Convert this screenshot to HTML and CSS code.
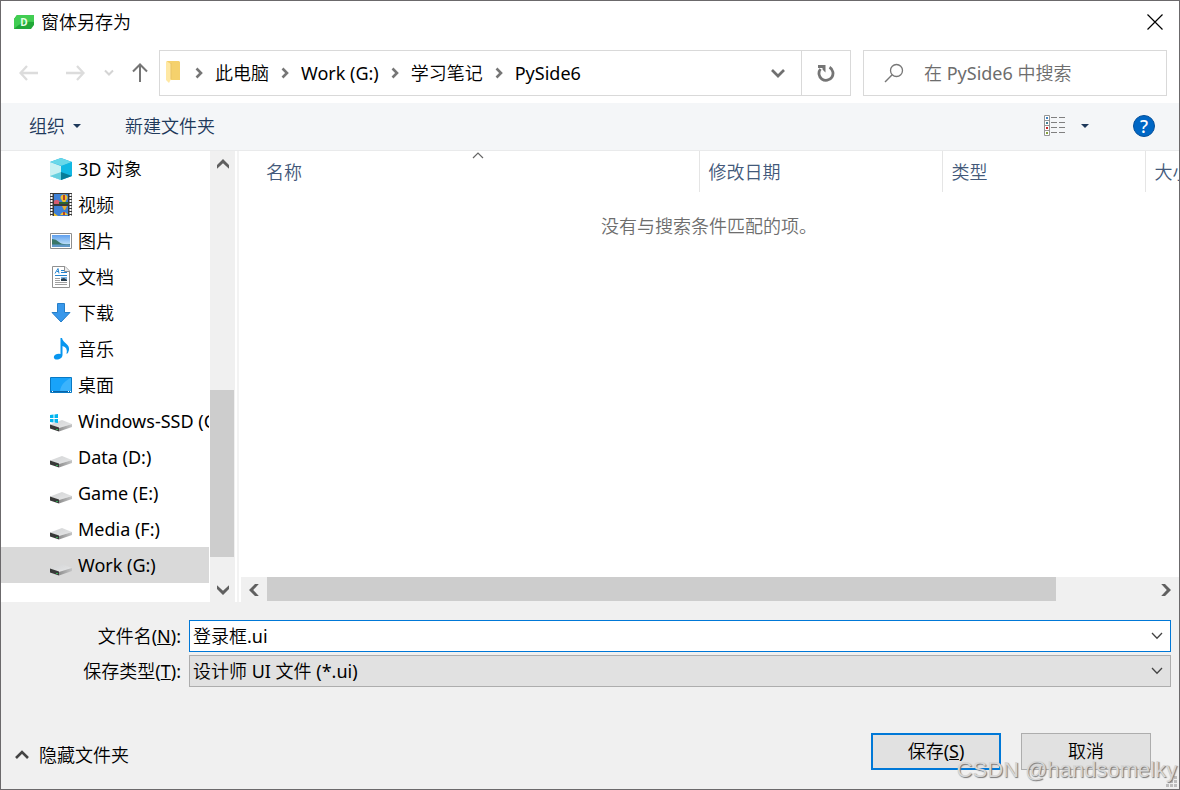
FILE: index.html
```html
<!DOCTYPE html>
<html lang="zh-CN">
<head>
<meta charset="utf-8">
<title>窗体另存为</title>
<link rel="stylesheet" href="styles.css">
</head>
<body>
<svg class="defs" aria-hidden="true">
  <defs>
    <linearGradient id="top-metal" x1="0" y1="0" x2="1" y2="1"><stop offset="0" stop-color="#d2d3d4"/><stop offset="1" stop-color="#e6e7e8"/></linearGradient>
    <linearGradient id="side-metal" x1="0" y1="0" x2="1" y2="0"><stop offset="0" stop-color="#8f8f8f"/><stop offset="1" stop-color="#c4c5c6"/></linearGradient>
    <linearGradient id="sky" x1="0" y1="0" x2="0" y2="1"><stop offset="0" stop-color="#5f9fee"/><stop offset="1" stop-color="#d8f2fb"/></linearGradient>
    <symbol id="drive" viewBox="0 0 22 24">
      <path d="M0 15.500 12 11 22 15 9 19Z" fill="url(#top-metal)"/>
      <path d="M9 19 22 15V18L9 22.500Z" fill="url(#side-metal)"/>
      <path d="M0 15.500 9 18.500V22.500L0 19.500Z" fill="#383938"/>
      <path d="M6 20h2v1H6z" fill="#35a853"/>
    </symbol>
    <symbol id="crumb-arrow" viewBox="0 0 8 12"><path d="M1.500 1.500 6 6 1.500 10.500" fill="none" stroke="#767676" stroke-width="2.600"/></symbol>
    <symbol id="thin-down" viewBox="0 0 12 8"><path d="M1 1 6 6.200 11 1" fill="none" stroke="#444" stroke-width="1.300"/></symbol>
    <symbol id="bold-up" viewBox="0 0 12 10"><path d="M0 6 6 0 12 6V9.800L6 4.200 0 9.800Z" fill="#606060"/></symbol>
  </defs>
</svg>
<main class="dialog">
  <header class="titlebar">
    <svg class="app-icon" viewBox="0 0 20 14"><path d="M3 0H20V10L17 14H0V4Z" fill="#21a838"/><path d="M3 0H20V7Q8 5 0 14V4Z" fill="#41cd52"/><text x="10" y="11" text-anchor="middle" class="app-letter">D</text></svg>
    <h1 class="title">窗体另存为</h1>
    <button class="plain close" aria-label="关闭"><svg width="16" height="16" viewBox="0 0 16 16"><path d="M.5.5 15.500 15.500M15.500.5.5 15.500" fill="none" stroke="#000" stroke-width="1.200"/></svg></button>
  </header>

  <nav class="navbar">
    <div class="history">
      <button class="plain" aria-label="后退"><svg width="20" height="16" viewBox="0 0 20 16"><path d="M8 1 1.500 8 8 15M2 8H19" fill="none" stroke="#dcdcdc" stroke-width="2.300"/></svg></button>
      <button class="plain" aria-label="前进"><svg width="20" height="16" viewBox="0 0 20 16"><path d="M12 1 18.500 8 12 15M18 8H1" fill="none" stroke="#dcdcdc" stroke-width="2.300"/></svg></button>
      <button class="plain recent" aria-label="最近浏览的位置"><svg width="10" height="8" viewBox="0 0 10 8"><path d="M1 1.500 5 5.500 9 1.500" fill="none" stroke="#d4d4d4" stroke-width="2"/></svg></button>
      <button class="plain" aria-label="向上"><svg width="16" height="20" viewBox="0 0 16 20"><path d="M1 8.500 8 1.500 15 8.500M8 2V19" fill="none" stroke="#757575" stroke-width="2"/></svg></button>
    </div>
    <div class="address">
      <svg class="folder" width="14" height="22" viewBox="0 0 14 22"><path d="M1 0H13L14 1V19H4Z" fill="#f5d16c"/><path d="M0 0 5 3V18L3 22 0 19Z" fill="#ffe8a3"/><path d="M5 2V18" stroke="#e8c466" fill="none"/></svg>
      <svg class="crumb-arrow"><use href="#crumb-arrow"/></svg><a class="crumb" href="#">此电脑</a>
      <svg class="crumb-arrow"><use href="#crumb-arrow"/></svg><a class="crumb" href="#">Work (G:)</a>
      <svg class="crumb-arrow"><use href="#crumb-arrow"/></svg><a class="crumb" href="#">学习笔记</a>
      <svg class="crumb-arrow"><use href="#crumb-arrow"/></svg><a class="crumb" href="#">PySide6</a>
      <button class="plain address-open" aria-label="以前的位置"><svg width="14" height="10" viewBox="0 0 14 10"><path d="M1 2 7 8 13 2" fill="none" stroke="#707070" stroke-width="2.700"/></svg></button>
      <button class="plain refresh" aria-label="刷新"><svg width="18" height="18" viewBox="0 0 18 18"><path d="M12.500 3.300A7 7 0 1 1 3.500 5" fill="none" stroke="#757575" stroke-width="2.800"/><path d="M1 1H8.500V8.500L5.500 5.500V4H1Z" fill="#757575"/></svg></button>
    </div>
    <div class="search">
      <svg width="20" height="20" viewBox="0 0 20 20"><circle cx="12.500" cy="7.500" r="6" fill="none" stroke="#777" stroke-width="1.300"/><path d="M8.200 11.800 1 19" stroke="#777" stroke-width="1.400"/></svg>
      <input type="search" class="search-input" placeholder="在 PySide6 中搜索" aria-label="在 PySide6 中搜索">
    </div>
  </nav>

  <div class="toolbar">
    <button class="plain organize">组织<span class="caret"></span></button>
    <button class="plain">新建文件夹</button>
    <button class="plain view" aria-label="更改视图"><svg width="22" height="21" viewBox="0 0 22 21"><path d="M.5.5H5.500V20.500H.5ZM.5 5.500H5.500M.5 10.500H5.500M.5 15.500H5.500" fill="#fff" stroke="#969696"/><path d="M7 2.500H13M15 2.500H21M7 7.500H13M15 7.500H21M7 12.500H13M15 12.500H21M7 17.500H13M15 17.500H21" stroke="#808080"/><path d="M2 2h2v2H2z" fill="#4186c4"/><path d="M2 7h2v2H2z" fill="#458196"/><path d="M2 12h2v2H2z" fill="#d02424"/><path d="M2 17h2v2H2z" fill="#85a13d"/></svg><span class="caret"></span></button>
    <button class="help" aria-label="帮助">?</button>
  </div>

  <div class="browser">
    <div class="sidebar">
      <ul class="places">
        <li class="place"><svg class="place-icon" viewBox="0 0 22 24"><path d="M11 1 22 5V19L11 23 0 19V5Z" fill="#0eaade"/><path d="M0 5 11 1 22 5 12 9Z" fill="#69d8e9"/><path d="M0 5 11 9V23L0 19Z" fill="#c8f1f3"/><path d="M11 9 22 5V19L11 16Z" fill="#12b8e3"/><path d="M0 19 11 15V23Z" fill="#67d0df"/><path d="M11 15 22 19 11 23Z" fill="#067d98"/></svg>3D 对象</li>
        <li class="place"><svg class="place-icon" viewBox="0 0 22 24"><path d="M0 0H22V23H0Z" fill="#383838"/><path d="M1.500 1V23M20.500 1V23" stroke="#fff" stroke-width="2" stroke-dasharray="2 1"/><path d="M4 1H18V11H4ZM4 13H18V23H4Z" fill="#3d80d6"/><path d="M10.500 5A3.500 3.500 0 0 1 17.500 5L15 9.500H13Z" fill="#efc02b"/><path d="M13 2H15V7H13Z" fill="#b5412b"/><path d="M4 8Q7 5 10 9L11 11H4Z" fill="#d65c70"/><path d="M9 9H18V11H9Z" fill="#2c652f"/><path d="M12 13H17L15 17H14Z" fill="#eaab2d"/><path d="M10 22Q14 16 18 22Z" fill="#f2c631"/><path d="M13 19H15V22H13Z" fill="#b5412b"/><path d="M4 20 8 23H4Z" fill="#efc02b"/></svg>视频</li>
        <li class="place"><svg class="place-icon" viewBox="0 0 22 24"><path d="M.5 4.500H21.500V19.500H.5Z" fill="#fff" stroke="#8e8e8e"/><path d="M2 6H20V18H2Z" fill="url(#sky)"/><path d="M2 10Q6 10 9 13T20 15V16H2Z" fill="#397668"/><path d="M2 15.500H20V18H2Z" fill="#6098c7"/></svg>图片</li>
        <li class="place"><svg class="place-icon" viewBox="0 0 22 24"><path d="M2.500 1.500H15L19.500 6V22.500H2.500Z" fill="#fff" stroke="#909090"/><path d="M14.500 1.500V6.500H19.500" fill="#eee" stroke="#909090"/><path d="M5 8.500 8 3.500 9 8.500M7 6.500H9M11 5.500H14M11 7.500H17M5 10.500H17" fill="none" stroke="#2484cf"/><path d="M5 13.500H10M5 15.500H10M5 17.500H17M5 19.500H17" stroke="#a0a0a0"/><path d="M11 12H17V16H11Z" fill="#7db1dd"/><path d="M11 14 14 13 17 15V16H11Z" fill="#293e4d"/></svg>文档</li>
        <li class="place"><svg class="place-icon" viewBox="0 0 22 24"><path d="M7.500 2.500H14.500V11.500H20L11 21 2 11.500H7.500Z" fill="#3998eb" stroke="#267fc9"/></svg>下载</li>
        <li class="place"><svg class="place-icon" viewBox="0 0 22 24"><path d="M10.500 1H12C13 6 20 7 19 13Q18.500 16 16.500 17 18 10 12.500 9V18C12.500 21 9 23 6 22.500 3 22 3 18 7 17Q9 16.500 10.500 17Z" fill="#0896ef"/></svg>音乐</li>
        <li class="place"><svg class="place-icon" viewBox="0 0 22 24"><path d="M.5 4.500H21.500V19.500H.5Z" fill="#18a3fa" stroke="#0879c4"/><path d="M10 18C11 11 16 7 21 5V18Z" fill="#3bb3fc"/><path d="M1 18.500H21" stroke="#0b64a7"/><path d="M2 18.500H3M18 18.500H21" stroke="#fff" stroke-dasharray="1 1"/></svg>桌面</li>
        <li class="place"><svg class="place-icon" viewBox="0 0 22 24"><use href="#drive"/><path d="M0 6 3.500 5.500V9H0ZM4.500 5.400 8 5V9H4.500ZM0 10H3.500V13.500L0 13ZM4.500 10H8V14L4.500 13.600Z" fill="#00b5ef"/></svg>Windows-SSD (C:)</li>
        <li class="place"><svg class="place-icon"><use href="#drive"/></svg>Data (D:)</li>
        <li class="place"><svg class="place-icon"><use href="#drive"/></svg>Game (E:)</li>
        <li class="place"><svg class="place-icon"><use href="#drive"/></svg>Media (F:)</li>
        <li class="place selected"><svg class="place-icon"><use href="#drive"/></svg>Work (G:)</li>
      </ul>
      <div class="scroll-v">
        <button class="plain arrow" aria-label="向上滚动"><svg class="bold"><use href="#bold-up"/></svg></button>
        <span class="before-v"></span><span class="thumb thumb-v"></span><span class="after-v"></span>
        <button class="plain arrow" aria-label="向下滚动"><svg class="bold down"><use href="#bold-up"/></svg></button>
      </div>
    </div>
    <section class="files">
      <table class="file-table">
        <thead><tr>
          <th class="col-name">名称<svg class="sort" viewBox="0 0 12 7"><path d="M1 6 6 1 11 6" fill="none" stroke="#666" stroke-width="1.200"/></svg></th>
          <th class="col-date">修改日期</th><th class="col-type">类型</th><th class="col-size">大小</th>
        </tr></thead>
      </table>
      <p class="empty">没有与搜索条件匹配的项。</p>
      <div class="scroll-h">
        <button class="plain arrow" aria-label="向左滚动"><svg class="bold left"><use href="#bold-up"/></svg></button>
        <span class="thumb thumb-h"></span><span class="after-h"></span>
        <button class="plain arrow" aria-label="向右滚动"><svg class="bold right"><use href="#bold-up"/></svg></button>
      </div>
    </section>
  </div>

  <form class="footer">
    <div class="fields">
      <label for="filename">文件名(<u>N</u>):</label>
      <div class="combo"><input id="filename" class="field name-field" type="text" value="登录框.ui"><svg class="combo-arrow"><use href="#thin-down"/></svg></div>
      <label for="filetype">保存类型(<u>T</u>):</label>
      <div class="combo"><select id="filetype" class="field type-field"><option>设计师 UI 文件 (*.ui)</option></select><svg class="combo-arrow"><use href="#thin-down"/></svg></div>
    </div>
    <div class="actions">
      <button type="button" class="plain hide-folders"><svg width="14" height="10" viewBox="0 0 14 10"><path d="M1 8 7 2 13 8" fill="none" stroke="#444" stroke-width="2.600"/></svg>隐藏文件夹</button>
      <button type="button" class="action primary">保存(<u>S</u>)</button>
      <button type="button" class="action">取消</button>
    </div>
    <svg class="grip" width="11" height="11" viewBox="0 0 11 11"><path d="M8 0h3v3H8zM4 4h3v3H4zM8 4h3v3H8zM0 8h3v3H0zM4 8h3v3H4zM8 8h3v3H8z" fill="#bdbdbd"/></svg>
    <span class="watermark">CSDN @handsomelky</span>
  </form>
</main>
</body>
</html>
```

FILE: styles.css
```css
* { box-sizing: border-box; }
body {
  margin: 0;
  color: #000;
  font: 400 18px/24px "Noto Sans", "Noto Sans CJK SC DemiLight", "Noto Sans CJK SC", sans-serif;
}
button, input, select { font: inherit; color: inherit; }
svg { display: block; flex: none; }
.defs { position: absolute; width: 0; height: 0; }
.plain {
  display: flex;
  align-items: center;
  justify-content: center;
  padding: 0;
  border: 0;
  background: none;
}
.dialog {
  display: flex;
  flex-direction: column;
  min-height: 100vh;
  border: 1px solid #6b696b;
  background: #fff;
}

/* Title bar */
.titlebar { display: flex; align-items: center; height: 42px; padding: 0 16px 0 13px; }
.app-icon { width: 20px; height: 14px; margin-right: 7px; }
.app-letter { font: 700 10px "Open Sans", sans-serif; fill: #e8ffe8; }
.title { margin: 0; font-size: 18px; font-weight: inherit; }
.close { margin-left: auto; }

/* Navigation */
.navbar { display: flex; padding: 7px 12px 7px 18px; }
.history { display: flex; align-items: center; gap: 26px; width: 140px; }
.recent { margin: 0 -8px 0 -7px; }
.address {
  display: flex;
  flex: 1;
  align-items: center;
  height: 46px;
  padding-bottom: 1px;
  border: 1px solid #d9d9d9;
}
.folder { margin: 0 15px 2px 6px; }
.crumb-arrow { width: 8px; height: 12px; margin-right: 12px; }
.crumb { margin-right: 12px; color: inherit; text-decoration: none; white-space: nowrap; }
.address-open { width: 46px; height: 44px; margin-left: auto; }
.refresh { width: 49px; height: 44px; border-left: 1px solid #d9d9d9; }
.search {
  display: flex;
  align-items: center;
  gap: 20px;
  width: 304px;
  height: 46px;
  margin-left: 12px;
  padding-left: 20px;
  border: 1px solid #d9d9d9;
}
.search-input { width: 100%; min-width: 0; padding: 0; border: 0; outline: 0; background: none; }
.search-input::placeholder { color: #6d6d6d; opacity: 1; }

/* Toolbar */
.toolbar {
  display: flex;
  align-items: center;
  height: 48px;
  padding: 0 24px 2px 28px;
  border-bottom: 1px solid #e9eaeb;
  background: #f4f6f8;
  color: #1e395b;
}
.organize { gap: 8px; margin-right: 44px; }
.caret { border: 4px solid transparent; border-top-color: #1e395b; border-bottom: 0; }
.view { gap: 15px; margin-left: auto; }
.help {
  width: 22px;
  height: 22px;
  margin-left: 44px;
  padding: 0;
  border: 1px solid #06509a;
  border-radius: 50%;
  background: #0067c5;
  color: #fff;
  font-size: 18px;
  font-weight: 500;
  line-height: 18px;
}

/* Folder pane and file list */
.browser { display: flex; flex: 1; }
.sidebar { display: flex; width: 238px; border-right: 2px solid #f3f3f3; }
.places { width: 208px; margin: 0 1px 0 0; padding: 0; list-style: none; overflow: hidden; }
.place {
  display: flex;
  align-items: center;
  gap: 6px;
  height: 36px;
  padding-left: 49px;
  white-space: nowrap;
}
.place-icon { width: 22px; height: 24px; }
.selected { background: #d9d9d9; }
.scroll-v { display: flex; flex-direction: column; width: 25px; background: #f0f0f0; }
.arrow { width: 25px; height: 25px; }
.bold { width: 12px; height: 10px; }
.down { transform: rotate(180deg); }
.left { transform: rotate(-90deg); }
.right { transform: rotate(90deg); }
.thumb { background: #cdcdcd; }
.before-v { flex: 214; }
.thumb-v { flex: 167; width: 24px; }
.after-v { flex: 20; }
.files {
  display: flex;
  flex: 1;
  flex-direction: column;
  min-width: 0;
  overflow: hidden;
}
.file-table { width: 1004px; table-layout: fixed; border-collapse: collapse; color: #43597a; }
.file-table th {
  height: 41px;
  padding: 0 9px;
  border-right: 1px solid #e5e5e5;
  font-weight: inherit;
  text-align: left;
}
.file-table .col-name { position: relative; width: 460px; padding-left: 27px; }
.col-date { width: 243px; }
.col-type { width: 203px; }
.sort { position: absolute; top: 1px; left: 233px; width: 12px; height: 7px; }
.empty { margin: 22px 0 0; color: #6d6d6d; text-align: center; }
.scroll-h { display: flex; margin: auto 0 0 2px; background: #f0f0f0; }
.scroll-h .arrow { width: 26px; }
.thumb-h { flex: 788; height: 24px; }
.after-h { flex: 97; }

/* File name, type and actions */
.footer { position: relative; padding: 18px 8px 19px 20px; background: #f0f0f0; }
.fields {
  display: grid;
  grid-template-columns: 160px 1fr;
  align-items: center;
  gap: 3px 8px;
  text-align: right;
}
.combo { position: relative; }
.field {
  display: block;
  width: 100%;
  height: 32px;
  padding: 0 32px 0 3px;
  border: 1px solid #adadad;
  border-radius: 0;
  outline: 0;
  appearance: none;
}
.name-field { padding-bottom: 2px; border-color: #0078d7; background: #fff; }
.type-field { background: #e1e1e1; }
.combo-arrow { position: absolute; top: 12px; right: 8px; width: 12px; height: 8px; pointer-events: none; }
.actions { display: flex; align-items: center; gap: 20px; margin-top: 46px; padding-right: 20px; }
.hide-folders { gap: 10px; margin: 7px auto 0 -6px; }
.action { width: 130px; height: 37px; padding: 0 0 2px; border: 1px solid #adadad; background: #e1e1e1; }
.primary { border: 2px solid #0078d7; }
.grip { position: absolute; right: 2px; bottom: 2px; }
.watermark {
  position: absolute;
  right: 2px;
  bottom: 6px;
  color: #d6d6d6;
  font: 400 22px/26px "Liberation Sans", sans-serif;
  text-shadow: 1px 1px 1px #777;
  white-space: nowrap;
  pointer-events: none;
}
```
